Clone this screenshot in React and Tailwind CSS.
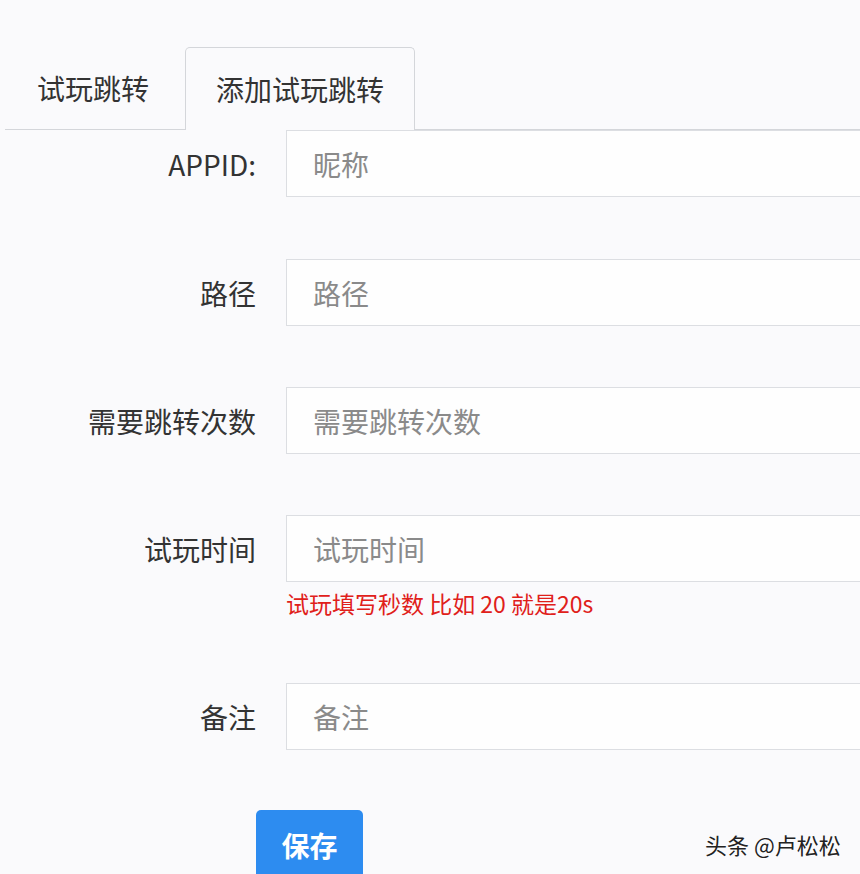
import React from "react";

const font = { fontFamily: '"Noto Sans CJK SC", "Noto Sans", sans-serif' };

function Row({ label, placeholder, className = "" }) {
  return (
    <div className={"flex items-center " + className}>
      <div className="w-[256px] shrink-0 text-right text-[28px] text-[#333]">{label}</div>
      <div className="ml-[30px] h-[67px] w-[600px] shrink-0 border border-[#dcdee2] bg-[#fefefe] flex items-center pl-[26px] text-[28px] text-[#8a8a8a]">
        {placeholder}
      </div>
    </div>
  );
}

export default function App() {
  return (
    <div className="relative w-[860px] h-[874px] overflow-hidden bg-[#fafafc]" style={font}>
      <div className="pt-[47px] pl-[5px]">
        <div className="flex items-end border-b border-[#d4d6da]">
          <div className="h-[82px] pl-[32px] pr-[36px] flex items-center text-[28px] text-[#333]">试玩跳转</div>
          <div className="-mb-px h-[83px] px-[30px] flex items-center text-[28px] text-[#333] border border-b-0 border-[#d4d6da] rounded-t-[5px] bg-[#fafafc]">
            添加试玩跳转
          </div>
        </div>
      </div>
      <div className="flex flex-col">
        <Row label="APPID:" placeholder="昵称" />
        <Row label="路径" placeholder="路径" className="mt-[62px]" />
        <Row label="需要跳转次数" placeholder="需要跳转次数" className="mt-[61px]" />
        <Row label="试玩时间" placeholder="试玩时间" className="mt-[61px]" />
        <div className="ml-[286px] mt-[4px] h-[34px] flex items-center text-[23px] text-[#e0201a]">
          试玩填写秒数 比如 20 就是20s
        </div>
        <Row label="备注" placeholder="备注" className="mt-[63px]" />
        <div className="mt-[60px] ml-[256px]">
          <button className="h-[70px] w-[107px] rounded-[5px] bg-[#2d8cf0] text-white text-[28px] font-bold flex items-center justify-center">
            保存
          </button>
        </div>
      </div>
      <div className="absolute left-[705px] top-[828px] text-[22px] text-[#222]" style={{ textShadow: "0 0 2px #fff, 0 0 2px #fff" }}>
        头条 @卢松松
      </div>
    </div>
  );
}
